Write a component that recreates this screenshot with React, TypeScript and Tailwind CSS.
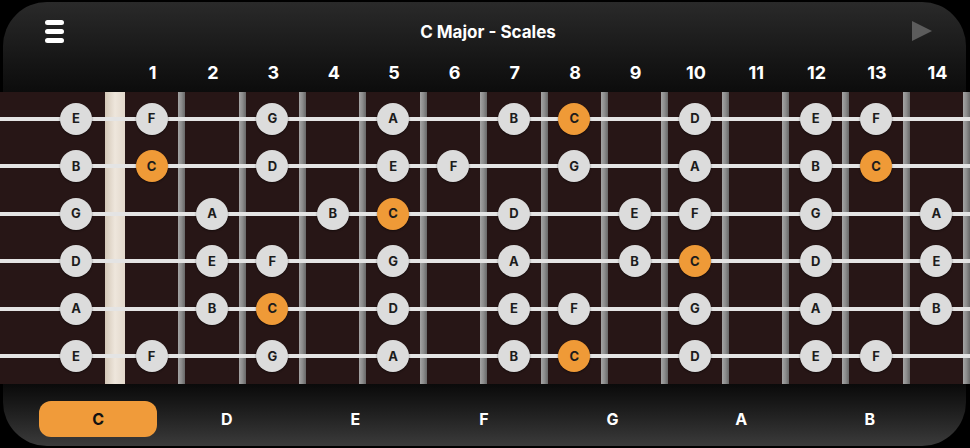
const CHROMATIC = ['C', 'C#', 'D', 'D#', 'E', 'F', 'F#', 'G', 'G#', 'A', 'A#', 'B'];
const SCALE = ['C', 'D', 'E', 'F', 'G', 'A', 'B'];
const STRINGS = ['E', 'B', 'G', 'D', 'A', 'E'];
const FRETS = Array.from({ length: 14 }, (_, i) => i + 1);

const noteAt = (open: string, fret: number) =>
  CHROMATIC[(CHROMATIC.indexOf(open) + fret) % 12];

const Note = ({ name }: { name: string }) => {
  if (!SCALE.includes(name)) return null;
  const root = name === 'C';
  return (
    <div
      className={`flex h-[32px] w-[32px] items-center justify-center rounded-full text-[13px] font-bold text-[#1c1c1c] shadow-[0_1px_2px_rgba(0,0,0,0.45)] ${
        root ? 'bg-[#ef9a37]' : 'bg-[#dcdcdc]'
      }`}
    >
      {name}
    </div>
  );
};

const MenuIcon = () => (
  <div className="flex w-[19px] flex-col gap-[4px]">
    <span className="h-[5px] rounded-full bg-white" />
    <span className="h-[5px] rounded-full bg-white" />
    <span className="h-[5px] rounded-full bg-white" />
  </div>
);

const PlayIcon = () => (
  <svg width="20" height="20" viewBox="0 0 20 20" className="-mt-[3px]">
    <path d="M0 0 L20 10 L0 20 Z" fill="#5c5c5c" />
  </svg>
);

const Header = () => (
  <div className="ml-[3px] mr-[4px] mt-[2px] h-[90px] rounded-t-[44px] bg-linear-to-b from-[#2a2a2a] to-[#0c0c0c]">
    <div className="flex h-[60px] items-center pl-[42px] pr-[34px]">
      <div className="-mt-[2px]">
        <MenuIcon />
      </div>
      <div className="flex-1 pt-[2px] text-center text-[17px] font-bold text-white">C Major - Scales</div>
      <PlayIcon />
    </div>
    <div className="-ml-[3px] flex h-[20px] w-[970px] items-center text-[18px] font-bold text-white">
      <div className="w-[105px]" />
      <div className="w-[20px]" />
      {FRETS.map((f) => (
        <div key={f} className="flex flex-1 items-center">
          <div className="flex-1 pl-[2px] text-center">{f}</div>
          <div className="w-[7px]" />
        </div>
      ))}
    </div>
  </div>
);

const Fretboard = () => (
  <div className="relative h-[292px] bg-[#271616] pt-[3px]">
    <div className="absolute inset-0 flex">
      <div className="w-[105px]" />
      <div className="w-[20px] bg-linear-to-r from-[#d4c8b8] via-[#eee6dc] to-[#e2d8cb]" />
      {FRETS.map((f) => (
        <div key={f} className="flex flex-1">
          <div className="flex-1" />
          <div className="w-[7px] bg-linear-to-r from-[#a4a4a4] via-[#8c8c8c] to-[#686868]" />
        </div>
      ))}
    </div>
    {STRINGS.map((open, s) => (
      <div key={s} className="relative flex h-[47.5px] items-center">
        <div className="absolute left-0 right-0 top-1/2 h-[4px] -translate-y-1/2 bg-[#e4e4e4]" />
        <div className="relative flex w-full items-center">
          <div className="flex w-[105px] justify-end pr-[13px]">
            <Note name={open} />
          </div>
          <div className="w-[20px]" />
          {FRETS.map((f) => (
            <div key={f} className="flex flex-1 items-center">
              <div className="flex flex-1 justify-center">
                <Note name={noteAt(open, f)} />
              </div>
              <div className="w-[7px]" />
            </div>
          ))}
        </div>
      </div>
    ))}
  </div>
);

const KeyBar = () => (
  <div className="ml-[3px] mr-[4px] h-[62px] rounded-b-[44px] bg-linear-to-b from-[#0a0a0a] to-[#3b3b3b] pl-[31px] pt-[17px]">
    <div className="grid w-[900px] grid-cols-7">
      {SCALE.map((k) => (
        <div key={k} className="flex justify-center">
          <div
            className={`flex h-[36px] w-[118px] items-center justify-center rounded-[12px] text-[16px] font-bold ${
              k === 'C' ? 'bg-[#f09b3a] text-[#111]' : 'text-white'
            }`}
          >
            {k}
          </div>
        </div>
      ))}
    </div>
  </div>
);

export default function App() {
  return (
    <div className="h-[448px] w-[970px] overflow-hidden bg-black font-['Inter',sans-serif]">
      <Header />
      <Fretboard />
      <KeyBar />
    </div>
  );
}
